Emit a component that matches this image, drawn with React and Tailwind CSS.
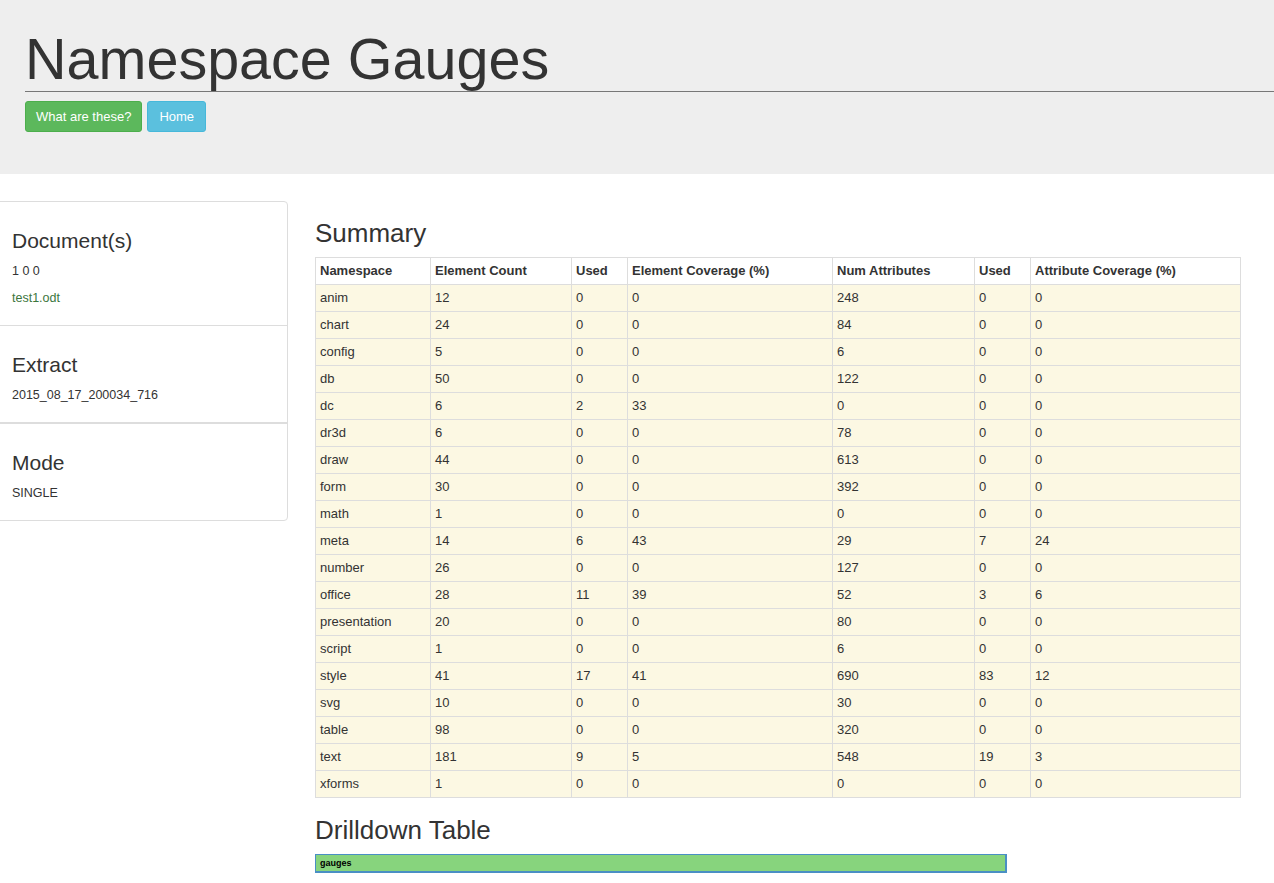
const rows = [
    ["anim", 12, 0, 0, 248, 0, 0],
    ["chart", 24, 0, 0, 84, 0, 0],
    ["config", 5, 0, 0, 6, 0, 0],
    ["db", 50, 0, 0, 122, 0, 0],
    ["dc", 6, 2, 33, 0, 0, 0],
    ["dr3d", 6, 0, 0, 78, 0, 0],
    ["draw", 44, 0, 0, 613, 0, 0],
    ["form", 30, 0, 0, 392, 0, 0],
    ["math", 1, 0, 0, 0, 0, 0],
    ["meta", 14, 6, 43, 29, 7, 24],
    ["number", 26, 0, 0, 127, 0, 0],
    ["office", 28, 11, 39, 52, 3, 6],
    ["presentation", 20, 0, 0, 80, 0, 0],
    ["script", 1, 0, 0, 6, 0, 0],
    ["style", 41, 17, 41, 690, 83, 12],
    ["svg", 10, 0, 0, 30, 0, 0],
    ["table", 98, 0, 0, 320, 0, 0],
    ["text", 181, 9, 5, 548, 19, 3],
    ["xforms", 1, 0, 0, 0, 0, 0],
];

const headers = [
    "Namespace",
    "Element Count",
    "Used",
    "Element Coverage (%)",
    "Num Attributes",
    "Used",
    "Attribute Coverage (%)",
];

const widths = [115, 141, 56, 205, 142, 56, 210];

export default function App() {
    return (
        <div className="min-h-screen bg-white text-[#333] font-['Liberation_Sans',Arial,sans-serif]">
            {/* Jumbotron */}
            <div className="bg-[#eeeeee] pt-[27px] pb-[42px]">
                <h1 className="ml-[25px] border-b border-[#777] text-[57.5px] leading-[64px] font-normal text-[#333]">
                    Namespace Gauges
                </h1>
                <div className="ml-[25px] mt-[9px] flex gap-[5px]">
                    <button className="h-[31px] px-[10px] rounded-[3px] border border-[#4cae4c] bg-[#5cb85c] text-white text-[13px]">
                        What are these?
                    </button>
                    <button className="h-[31px] px-[11px] rounded-[3px] border border-[#46b8da] bg-[#5bc0de] text-white text-[13px]">
                        Home
                    </button>
                </div>
            </div>

            <div className="flex">
                {/* Sidebar */}
                <div className="w-[289px] -ml-px mt-[27px] self-start">
                    <div className="border border-[#dddddd] rounded-r-[4px]">
                        <div className="pl-[12px] pt-[27px] pb-[18px]">
                            <h3 className="text-[21px] leading-[24px]">Document(s)</h3>
                            <p className="mt-[9px] text-[12.5px] leading-[18px]">1 0 0</p>
                            <p className="mt-[9px] text-[12.5px] leading-[18px] text-[#3c763d]">test1.odt</p>
                        </div>
                        <div className="border-t border-b border-[#dddddd] pl-[12px] pt-[27px] pb-[18px]">
                            <h3 className="text-[21px] leading-[24px]">Extract</h3>
                            <p className="mt-[9px] text-[12.5px] leading-[18px]">2015_08_17_200034_716</p>
                        </div>
                        <div className="border-t border-[#dddddd] pl-[12px] pt-[27px] pb-[18px]">
                            <h3 className="text-[21px] leading-[24px]">Mode</h3>
                            <p className="mt-[9px] text-[12.5px] leading-[18px]">SINGLE</p>
                        </div>
                    </div>
                </div>

                {/* Main */}
                <div className="ml-[27px] mt-[44px]">
                    <h2 className="text-[26px] leading-[30px]">Summary</h2>
                    <table className="mt-[9px] table-fixed border-collapse w-[925px] text-[13px]">
                        <colgroup>
                            {widths.map((w, i) => (
                                <col key={i} style={{ width: w }} />
                            ))}
                        </colgroup>
                        <thead>
                            <tr className="bg-white">
                                {headers.map((h, i) => (
                                    <th
                                        key={i}
                                        className="border border-[#dddddd] pl-[4px] pr-[5px] py-[4px] leading-[18px] text-left font-bold"
                                    >
                                        {h}
                                    </th>
                                ))}
                            </tr>
                        </thead>
                        <tbody>
                            {rows.map((r) => (
                                <tr key={r[0]} className="bg-[#fcf8e3]">
                                    {r.map((c, i) => (
                                        <td
                                            key={i}
                                            className="border border-[#dddddd] pl-[4px] pr-[5px] py-[4px] leading-[18px]"
                                        >
                                            {c}
                                        </td>
                                    ))}
                                </tr>
                            ))}
                        </tbody>
                    </table>

                    <h2 className="mt-[17px] text-[26px] leading-[30px]">Drilldown Table</h2>
                    <div className="mt-[9px] w-[692px] h-[19px] bg-[#87d47d] border border-r-2 border-b-2 border-[#4a8fc4] pl-[4px] flex items-center">
                        <span className="text-[9px] font-bold text-black leading-none">gauges</span>
                    </div>
                </div>
            </div>
        </div>
    );
}
